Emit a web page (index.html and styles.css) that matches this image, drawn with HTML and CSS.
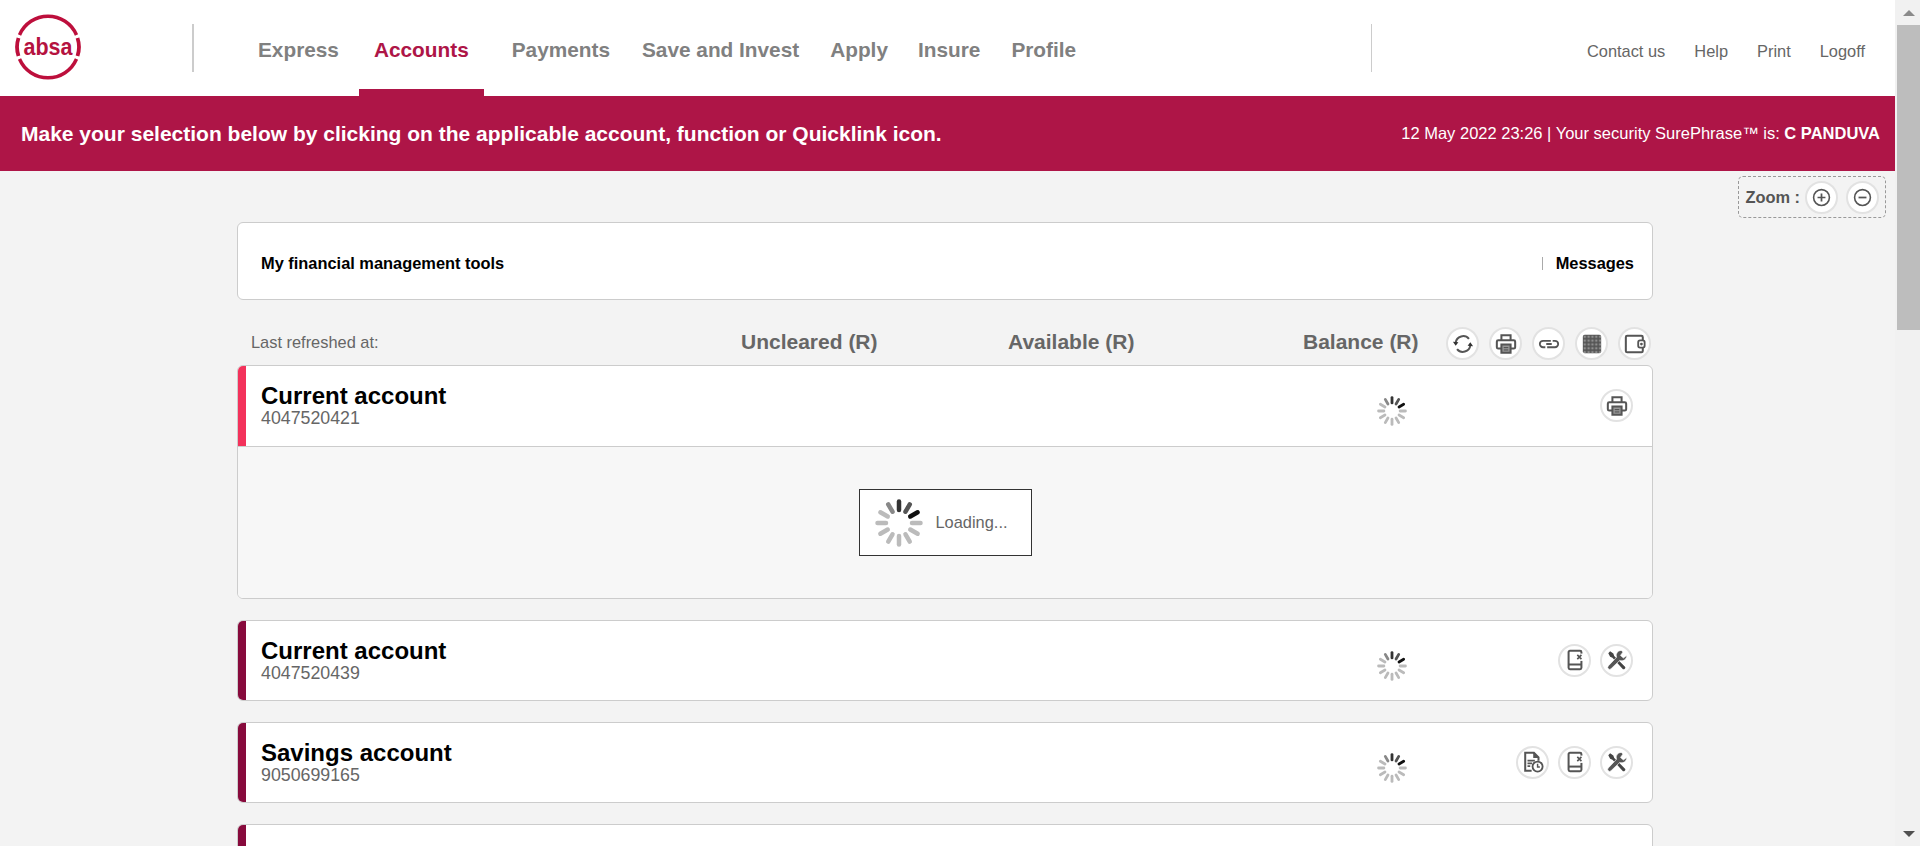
FILE: index.html
```html
<!DOCTYPE html>
<html lang="en">
<head>
    <meta charset="UTF-8">
    <meta name="viewport" content="width=device-width, initial-scale=1.0">
    <title>Absa Online Banking</title>
    <link rel="stylesheet" href="styles.css">
</head>
<body>
    <!-- Shared icons -->
    <svg class="icon-defs" aria-hidden="true">
        <defs>
            <pattern id="dots" width="4.2" height="4.2" patternUnits="userSpaceOnUse" x="2" y="2">
                <circle cx="2.1" cy="2.1" r="1.4" fill="#8e8e8e"/>
            </pattern>
        </defs>
        <symbol id="spinner" viewBox="-24 -24 48 48">
            <g stroke-width="4.5" stroke-linecap="round">
                <line y1="-13" y2="-21.5" stroke="#333" transform="rotate(0)"/>
                <line y1="-13" y2="-21.5" stroke="#555" transform="rotate(30)"/>
                <line y1="-13" y2="-21.5" stroke="#111" transform="rotate(60)"/>
                <line y1="-13" y2="-21.5" stroke="#bbb" transform="rotate(90)"/>
                <line y1="-13" y2="-21.5" stroke="#bbb" transform="rotate(120)"/>
                <line y1="-13" y2="-21.5" stroke="#bbb" transform="rotate(150)"/>
                <line y1="-13" y2="-21.5" stroke="#bbb" transform="rotate(180)"/>
                <line y1="-13" y2="-21.5" stroke="#bbb" transform="rotate(210)"/>
                <line y1="-13" y2="-21.5" stroke="#bbb" transform="rotate(240)"/>
                <line y1="-13" y2="-21.5" stroke="#bbb" transform="rotate(270)"/>
                <line y1="-13" y2="-21.5" stroke="#bbb" transform="rotate(300)"/>
                <line y1="-13" y2="-21.5" stroke="#888" transform="rotate(330)"/>
            </g>
        </symbol>
        <symbol id="i-refresh" viewBox="0 0 24 24">
            <path d="M4 10.5A8.2 8.2 0 0 1 18.5 6.5M20 13.5A8.2 8.2 0 0 1 5.5 17.5" fill="none" stroke="#555" stroke-width="2.2"/>
            <path d="M1 9.5l6 .5-3 4zM23 14.5l-6-.5 3-4z" fill="#333"/>
        </symbol>
        <symbol id="i-print" viewBox="0 0 24 24">
            <path d="M7 8V2.500h10V8M7 17H3.500A1.500 1.500 0 0 1 2 15.500V9.500A1.500 1.500 0 0 1 3.500 8h17A1.500 1.500 0 0 1 22 9.500v6a1.500 1.500 0 0 1-1.500 1.500H17" fill="none" stroke="#555" stroke-width="2.2"/>
            <path d="M7 12.500h10v9H7z" fill="#999" stroke="#555" stroke-width="2.2"/>
            <path d="M9.500 16h5M9.500 18.500h5" stroke="#444" stroke-width="1"/>
        </symbol>
        <symbol id="i-link" viewBox="0 0 24 24">
            <path d="M14 8.500H5.500a3.500 3.500 0 0 0 0 7H8M10 15.500h8.500a3.500 3.500 0 0 0 0-7H16M9 12h6" fill="none" stroke="#555" stroke-width="2"/>
        </symbol>
        <symbol id="i-grid" viewBox="0 0 24 24">
            <rect x="2" y="2" width="20" height="20" rx="2" fill="#555"/>
            <rect x="2" y="2" width="20" height="20" rx="2" fill="url(#dots)"/>
        </symbol>
        <symbol id="i-wallet" viewBox="0 0 24 24">
            <path d="M20.500 8V4.500A1.500 1.500 0 0 0 19 3H3.500A1.500 1.500 0 0 0 2 4.500v15A1.500 1.500 0 0 0 3.500 21H19a1.500 1.500 0 0 0 1.500-1.500V16" fill="none" stroke="#555" stroke-width="2.2"/>
            <rect x="15.500" y="8" width="7" height="8" rx="2" fill="#fff" stroke="#555" stroke-width="2"/>
            <circle cx="19" cy="12" r="1.500" fill="#555"/>
        </symbol>
        <symbol id="i-device" viewBox="0 0 24 24">
            <rect x="5" y="2" width="14" height="20" rx="1.500" fill="none" stroke="#555" stroke-width="2.2"/>
            <path d="M5 17h14" stroke="#555" stroke-width="2.2"/>
            <rect x="12.500" y="5" width="9" height="8" fill="#fff"/>
            <path d="M14.500 6.500l4.500 4.500M19 6.500l-4.500 4.500" stroke="#555" stroke-width="1.800"/>
        </symbol>
        <symbol id="i-tools" viewBox="0 0 24 24">
            <path d="M2.500 4.500l2-2 3.500 2.500 1 2.500L21 19.500a2 2 0 0 1-2.500 2.500L7 9.500 4.500 8.500z" fill="#444"/>
            <path d="M16.500 1.500a5.500 5.500 0 0 0-5 7.500L2.500 18.500a2.100 2.100 0 0 0 3 3l9.500-9a5.500 5.500 0 0 0 7.500-5.500l-3.500 2.800-3.200-2.800 2.800-3.800z" fill="#555" stroke="#fff" stroke-width=".7"/>
        </symbol>
        <symbol id="i-statement" viewBox="0 0 24 24">
            <path d="M10.500 21.500H3.500V2h9.500l5 5v3.500" fill="none" stroke="#555" stroke-width="2.2"/>
            <path d="M13 2v5h5" fill="#555" stroke="#555" stroke-width="1.500"/>
            <path d="M6 10.500h8M6 13.500h5M6 16.500h3" stroke="#555" stroke-width="1.800"/>
            <circle cx="17" cy="17" r="5.500" fill="#fff" stroke="#555" stroke-width="2"/>
            <path d="M17 14v3.500h2.500" fill="none" stroke="#555" stroke-width="1.600"/>
        </symbol>
        <symbol id="i-plus" viewBox="0 0 24 24">
            <circle cx="12" cy="12" r="10" fill="none" stroke="#555" stroke-width="2"/>
            <path d="M7 12h10M12 7v10" stroke="#555" stroke-width="2.2"/>
        </symbol>
        <symbol id="i-minus" viewBox="0 0 24 24">
            <circle cx="12" cy="12" r="10" fill="none" stroke="#555" stroke-width="2"/>
            <path d="M7 12h10" stroke="#555" stroke-width="2.2"/>
        </symbol>
    </svg>

    <div class="page">
        <div class="main">
            <header class="top-bar">
                <a class="logo" href="#">
                    <svg width="66" height="66" viewBox="0 0 66 66" aria-label="Absa">
                        <path d="M4.500 21A31 31 0 0 1 61.500 21M61.500 45A31 31 0 0 1 4.500 45" fill="none" stroke="#bd0f3c" stroke-width="3.500"/>
                        <path d="M3.500 24Q0.500 33 3.500 42M62.500 24Q65.500 33 62.500 42" fill="none" stroke="#bd0f3c" stroke-width="3.800"/>
                        <text class="logo-text" x="33" y="41" text-anchor="middle" textLength="49" lengthAdjust="spacingAndGlyphs">absa</text>
                    </svg>
                </a>
                <div class="divider divider-wide"></div>
                <ul class="main-nav">
                    <li class="nav-item"><a href="#">Express</a></li>
                    <li class="nav-item active"><a href="#">Accounts</a></li>
                    <li class="nav-item"><a href="#">Payments</a></li>
                    <li class="nav-item"><a href="#">Save and Invest</a></li>
                    <li class="nav-item"><a href="#">Apply</a></li>
                    <li class="nav-item"><a href="#">Insure</a></li>
                    <li class="nav-item"><a href="#">Profile</a></li>
                </ul>
                <div class="divider"></div>
                <ul class="util-nav">
                    <li><a href="#">Contact us</a></li>
                    <li><a href="#">Help</a></li>
                    <li><a href="#">Print</a></li>
                    <li><a href="#">Logoff</a></li>
                </ul>
            </header>

            <div class="banner">
                <strong class="banner-title">Make your selection below by clicking on the applicable account, function or Quicklink icon.</strong>
                <span class="banner-info">12 May 2022 23:26 | Your security SurePhrase™ is: <b>C PANDUVA</b></span>
            </div>

            <div class="zoom-row">
                <div class="zoom-box">
                    <span class="zoom-label">Zoom :</span>
                    <button class="icon-btn"><svg class="icon-small"><use href="#i-plus"/></svg></button>
                    <button class="icon-btn"><svg class="icon-small"><use href="#i-minus"/></svg></button>
                </div>
            </div>

            <div class="content">
                <div class="tools-card">
                    <span>My financial management tools</span>
                    <span class="messages">Messages</span>
                </div>

                <div class="columns">
                    <span class="refreshed">Last refreshed at:</span>
                    <span class="column-title">Uncleared (R)</span>
                    <span class="column-title">Available (R)</span>
                    <span class="column-title">Balance (R)</span>
                    <div class="actions">
                        <button class="icon-btn"><svg class="icon"><use href="#i-refresh"/></svg></button>
                        <button class="icon-btn"><svg class="icon"><use href="#i-print"/></svg></button>
                        <button class="icon-btn"><svg class="icon"><use href="#i-link"/></svg></button>
                        <button class="icon-btn"><svg class="icon"><use href="#i-grid"/></svg></button>
                        <button class="icon-btn"><svg class="icon"><use href="#i-wallet"/></svg></button>
                    </div>
                </div>

                <section class="account-card">
                    <div class="account-row account-row-open">
                        <div class="accent accent-bright"></div>
                        <div class="account-name">
                            <h2>Current account</h2>
                            <p>4047520421</p>
                        </div>
                        <svg class="spinner"><use href="#spinner"/></svg>
                        <div class="actions">
                            <button class="icon-btn"><svg class="icon"><use href="#i-print"/></svg></button>
                        </div>
                    </div>
                    <div class="account-body">
                        <div class="loading-box">
                            <svg class="spinner-large"><use href="#spinner"/></svg>
                            <span>Loading...</span>
                        </div>
                    </div>
                </section>

                <section class="account-card">
                    <div class="account-row">
                        <div class="accent"></div>
                        <div class="account-name">
                            <h2>Current account</h2>
                            <p>4047520439</p>
                        </div>
                        <svg class="spinner"><use href="#spinner"/></svg>
                        <div class="actions">
                            <button class="icon-btn"><svg class="icon"><use href="#i-device"/></svg></button>
                            <button class="icon-btn"><svg class="icon"><use href="#i-tools"/></svg></button>
                        </div>
                    </div>
                </section>

                <section class="account-card">
                    <div class="account-row">
                        <div class="accent"></div>
                        <div class="account-name">
                            <h2>Savings account</h2>
                            <p>9050699165</p>
                        </div>
                        <svg class="spinner"><use href="#spinner"/></svg>
                        <div class="actions">
                            <button class="icon-btn"><svg class="icon"><use href="#i-statement"/></svg></button>
                            <button class="icon-btn"><svg class="icon"><use href="#i-device"/></svg></button>
                            <button class="icon-btn"><svg class="icon"><use href="#i-tools"/></svg></button>
                        </div>
                    </div>
                </section>

                <section class="account-card">
                    <div class="account-row">
                        <div class="accent"></div>
                    </div>
                </section>
            </div>
        </div>

        <div class="scrollbar">
            <div class="scroll-arrow scroll-up"></div>
            <div class="scroll-track"><div class="scroll-thumb"></div></div>
            <div class="scroll-arrow scroll-down"></div>
        </div>
    </div>
</body>
</html>
```

FILE: styles.css
```css
html, body {
    margin: 0;
    height: 100%;
    overflow: hidden;
}
body {
    font-family: "Liberation Sans", Arial, sans-serif;
    font-size: 16.4px;
    color: #666;
    background-color: #f3f3f3;
}
a {
    color: inherit;
    text-decoration: none;
}
ul {
    list-style: none;
    margin: 0;
    padding: 0;
}
.icon-defs {
    width: 0;
    height: 0;
    display: block;
    overflow: hidden;
}
.page {
    display: flex;
    height: 846px;
    overflow: hidden;
}
.main {
    flex: 1;
    min-width: 0;
}

/* Header */
.top-bar {
    display: flex;
    height: 96px;
    background-color: #fff;
}
.logo {
    display: block;
    box-sizing: border-box;
    width: 192px;
    padding: 14px 0 0 15px;
}
.logo-text {
    font-family: "Liberation Sans", Arial, sans-serif;
    font-size: 24px;
    font-weight: bold;
    fill: #b5123f;
}
.divider {
    flex: none;
    width: 1px;
    height: 48px;
    margin-top: 24px;
    background-color: #ccc;
}
.divider-wide {
    width: 2px;
}
.main-nav {
    display: flex;
    flex: none;
    box-sizing: border-box;
    width: 1177px;
    padding-left: 64px;
    font-size: 20.8px;
    font-weight: bold;
    color: #808080;
}
.nav-item {
    box-sizing: border-box;
    height: 96px;
    padding-top: 11px;
    line-height: 78px;
    margin-right: 30px;
    border-bottom: 7px solid transparent;
}
.nav-item:nth-child(3) {
    margin-right: 32px;
}
.nav-item:nth-child(4) {
    margin-right: 31px;
}
.nav-item:nth-child(6) {
    margin-right: 31px;
}
.nav-item.active {
    color: #ae1547;
    margin-left: -10px;
    margin-right: 28px;
    padding-left: 15px;
    padding-right: 15px;
    border-bottom-color: #ae1547;
}
.util-nav {
    display: flex;
    gap: 29px;
    margin-left: auto;
    padding-right: 30px;
    line-height: 102px;
}

/* Banner */
.banner {
    display: flex;
    align-items: center;
    justify-content: space-between;
    height: 75px;
    padding: 0 15px 0 21px;
    background-color: #ae1547;
    color: #fff;
}
.banner-title {
    font-size: 21px;
}
.banner-info {
    font-size: 16.5px;
}

/* Zoom control */
.zoom-row {
    display: flex;
    justify-content: flex-end;
    padding: 5px 9px 4px 0;
}
.zoom-box {
    display: flex;
    align-items: center;
    gap: 8px;
    box-sizing: border-box;
    height: 42px;
    padding: 0 6px;
    border: 1px dashed #999;
    border-radius: 5px;
}
.zoom-label {
    font-weight: bold;
    color: #555;
    margin-right: -3px;
}

/* Buttons */
.icon-btn {
    display: flex;
    align-items: center;
    justify-content: center;
    box-sizing: border-box;
    width: 33px;
    height: 33px;
    padding: 0;
    background-color: #fff;
    border: 2px solid #e2e2e2;
    border-radius: 50%;
}
.icon {
    width: 22px;
    height: 22px;
}
.icon-small {
    width: 19px;
    height: 19px;
}
.actions {
    display: flex;
    justify-content: flex-end;
    gap: 9px;
}

/* Account list */
.content {
    width: 1416px;
    margin-left: 237px;
}
.tools-card {
    display: flex;
    align-items: center;
    justify-content: space-between;
    box-sizing: border-box;
    height: 78px;
    padding: 4px 18px 0 23px;
    background-color: #fff;
    border: 1px solid #ccc;
    border-radius: 6px;
    font-weight: bold;
    color: #000;
}
.messages {
    padding-left: 13px;
    border-left: 1px solid #aaa;
    line-height: 13px;
}
.columns {
    display: grid;
    grid-template-columns: 504px 267px 295px 143px 1fr;
    align-items: center;
    box-sizing: border-box;
    height: 65px;
    padding-top: 19px;
}
.refreshed {
    padding-left: 14px;
}
.column-title {
    font-size: 21px;
    font-weight: bold;
    color: #666;
}
.columns .actions {
    gap: 10px;
    padding-right: 2px;
    margin-top: 3px;
}
.account-card {
    margin-bottom: 21px;
    background-color: #fff;
    border: 1px solid #ccc;
    border-radius: 6px;
    overflow: hidden;
}
.account-row {
    display: grid;
    grid-template-columns: 8px 1131px 30px 1fr;
    align-items: center;
    height: 79px;
}
.account-row-open {
    height: 80px;
    border-bottom: 1px solid #ccc;
}
.account-row-open .account-name {
    margin-top: -2px;
}
.accent {
    align-self: stretch;
    background-color: #870a3c;
}
.accent-bright {
    background-color: #f3325b;
}
.account-name {
    padding-left: 15px;
    margin-top: -1px;
}
.account-name h2 {
    margin: 0;
    font-size: 24px;
    line-height: 26px;
    color: #000;
}
.account-name p {
    margin: 0;
    font-size: 17.8px;
    line-height: 18px;
}
.spinner {
    width: 30px;
    height: 30px;
    margin-top: 10px;
}
.account-row .actions {
    padding-right: 19px;
    margin-top: -1px;
}
.account-body {
    display: flex;
    justify-content: center;
    height: 151px;
    background-color: #f7f7f7;
}
.loading-box {
    display: flex;
    align-items: center;
    gap: 13px;
    box-sizing: border-box;
    width: 173px;
    height: 67px;
    margin-top: 42px;
    padding-left: 15px;
    background-color: #fff;
    border: 1px solid #333;
}
.spinner-large {
    width: 48px;
    height: 48px;
}

/* Scrollbar */
.scrollbar {
    display: flex;
    flex-direction: column;
    width: 25px;
    box-sizing: border-box;
    padding-left: 2px;
    background-color: #f1f1f1;
}
.scroll-track {
    flex: 1;
}
.scroll-thumb {
    height: 305px;
    background-color: #bdbdbd;
}
.scroll-arrow {
    display: flex;
    align-items: center;
    justify-content: center;
    height: 25px;
}
.scroll-arrow::before {
    content: "";
    border-left: 6px solid transparent;
    border-right: 6px solid transparent;
}
.scroll-up::before {
    border-bottom: 6px solid #8a8a8a;
}
.scroll-down::before {
    border-top: 6px solid #505050;
}
```
